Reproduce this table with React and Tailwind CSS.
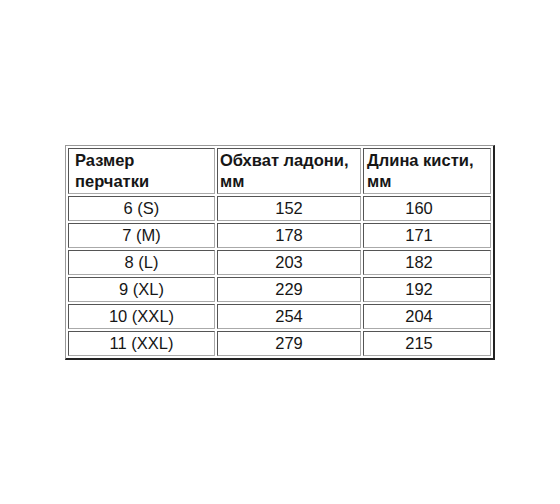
import React from "react";

const rows = [
  ["6 (S)", "152", "160"],
  ["7 (M)", "178", "171"],
  ["8 (L)", "203", "182"],
  ["9 (XL)", "229", "192"],
  ["10 (XXL)", "254", "204"],
  ["11 (XXL)", "279", "215"],
];

const cell =
  "border border-t-[#555] border-l-[#555] border-b-[#aaa] border-r-[#aaa] p-0";

export default function App() {
  return (
    <div
      className="w-[560px] h-[504px] bg-white text-[#161616] pt-[145px] pl-[65px]"
      style={{ fontFamily: '"Liberation Sans", Arial, sans-serif' }}
    >
      <table className="border-separate border-spacing-[2px] border border-t-[#999] border-l-[#999] border-b-2 border-r-2 border-b-[#222] border-r-[#222] w-[430px] text-[16.5px] leading-[21px] table-fixed">
        <colgroup>
          <col className="w-[147px]" />
          <col className="w-[144px]" />
          <col />
        </colgroup>
        <thead>
          <tr className="h-[46px]">
            <th className={`${cell} text-left font-bold pl-[6px] align-middle`}>
              Размер
              <br />
              перчатки
            </th>
            <th className={`${cell} text-left font-bold pl-[2px] align-middle`}>
              Обхват ладони,
              <br />
              мм
            </th>
            <th className={`${cell} text-left font-bold pl-[3px] align-middle`}>
              Длина кисти,
              <br />
              мм
            </th>
          </tr>
        </thead>
        <tbody>
          {rows.map((r) => (
            <tr key={r[0]} className="h-[25px]">
              <td className={`${cell} text-center`}>{r[0]}</td>
              <td className={`${cell} text-center`}>{r[1]}</td>
              <td className={`${cell} text-center pr-[16px]`}>{r[2]}</td>
            </tr>
          ))}
        </tbody>
      </table>
    </div>
  );
}
